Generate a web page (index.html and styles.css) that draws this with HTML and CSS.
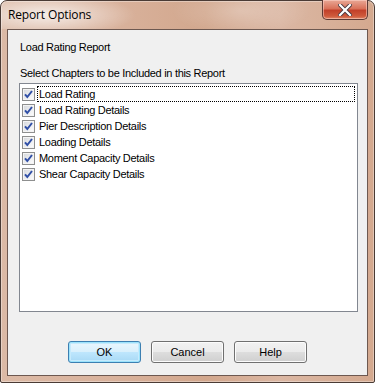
FILE: index.html
```html
<!DOCTYPE html>
<html>
<head>
<meta charset="utf-8">
<link rel="stylesheet" href="styles.css">
</head>
<body>
<div class="window">
  <div class="titlebar">
    <span class="title">Report Options</span>
    <button class="close" aria-label="Close">
      <svg width="14" height="12" viewBox="0 0 14 12"><path d="M2 1 L12 11 M12 1 L2 11" stroke="#4a3a40" stroke-width="4" stroke-linecap="square"/><path d="M2 1 L12 11 M12 1 L2 11" stroke="#ffffff" stroke-width="2.2" stroke-linecap="square"/></svg>
    </button>
  </div>
  <div class="client">
    <div class="label first">Load Rating Report</div>
    <div class="label second">Select Chapters to be Included in this Report</div>
    <div class="listbox">
      <div class="row"><span class="cb"></span><span class="text focus">Load Rating</span></div>
      <div class="row"><span class="cb"></span><span class="text">Load Rating Details</span></div>
      <div class="row"><span class="cb"></span><span class="text">Pier Description Details</span></div>
      <div class="row"><span class="cb"></span><span class="text">Loading Details</span></div>
      <div class="row"><span class="cb"></span><span class="text">Moment Capacity Details</span></div>
      <div class="row"><span class="cb"></span><span class="text">Shear Capacity Details</span></div>
    </div>
    <div class="buttons">
      <button class="btn default">OK</button>
      <button class="btn">Cancel</button>
      <button class="btn">Help</button>
    </div>
  </div>
</div>
</body>
</html>
```
FILE: styles.css
```css
html, body { margin: 0; padding: 0; background: #ffffff; }
.window {
  width: 375px; height: 383px; box-sizing: border-box;
  border: 1px solid #4a3b35; border-radius: 7px 7px 2px 2px;
  background: linear-gradient(90deg, #dcbaa6 0%, #d9b29c 30%, #d2a78d 55%, #dbb7a3 75%, #d4a98f 100%);
  display: flex; flex-direction: column;
  box-shadow: inset 0 0 0 1px rgba(255,255,255,0.35);
}
.titlebar {
  height: 28px; display: flex; align-items: flex-start; position: relative;
  background: radial-gradient(ellipse 90px 22px at 45px 14px, rgba(255,255,255,0.75), rgba(255,255,255,0) 100%),
              radial-gradient(ellipse 70px 24px at 240px 10px, rgba(255,255,255,0.25), rgba(255,255,255,0) 100%);
  border-radius: 6px 6px 0 0;
}
.title {
  font-family: "Open Sans", "Noto Sans", sans-serif; font-size: 12px; color: #000;
  margin: 6px 0 0 7px; line-height: 16px; letter-spacing: -0.15px;
}
.close {
  margin-left: auto; margin-right: 6px; margin-top: -1px;
  width: 46px; height: 20px; padding: 0; box-sizing: border-box;
  border: 1px solid #5c3a35; border-top: none; border-radius: 0 0 5px 5px;
  background: linear-gradient(180deg, #e9a896 0%, #d9725a 45%, #c2402a 55%, #cf5a3c 85%, #e08868 100%);
  box-shadow: inset 0 0 0 1px rgba(255,220,210,0.5);
  display: flex; align-items: center; justify-content: center;
}
.client {
  flex: 1; margin: 0 6px 6px 6px;
  border: 1px solid #6d5850; background: #f0f0f0;
  display: flex; flex-direction: column;
  font-family: "Liberation Sans", Arial, sans-serif; font-size: 11px; color: #000;
  letter-spacing: -0.3px;
}
.label { line-height: 13px; margin-left: 12px; }
.label.first { margin-top: 11px; }
.label.second { margin-top: 13px; }
.listbox {
  margin: 3px 9px 0 11px; height: 229px; box-sizing: border-box;
  border: 1px solid #828790; background: #ffffff; padding-top: 2px;
}
.row { height: 16px; display: flex; align-items: center; }
.cb {
  width: 13px; height: 13px; box-sizing: border-box; margin-left: 2px; flex: none;
  border: 1px solid #8e8f8f;
  background:
    url("data:image/svg+xml;utf8,<svg xmlns='http://www.w3.org/2000/svg' width='11' height='11' viewBox='0 0 11 11'><path d='M2 5.3 L4.3 8 L9 2' fill='none' stroke='%23304fa6' stroke-width='2'/></svg>") center/11px 11px no-repeat,
    linear-gradient(135deg, #d4d7dc 0%, #eeeff1 60%, #ffffff 100%);
  box-shadow: inset 0 0 0 1px #f4f4f4;
}
.text { margin-left: 2px; padding: 0 1px; line-height: 14px; border: 1px solid transparent; }
.text.focus { flex: 1; margin-right: 2px; border: 1px dotted #000; }
.buttons {
  margin-top: 29px; display: flex; justify-content: center; gap: 10px;
}
.btn {
  width: 73px; height: 22px; box-sizing: border-box; padding: 0;
  font-family: "Liberation Sans", Arial, sans-serif; font-size: 11px; color: #000;
  border: 1px solid #707070; border-radius: 3px;
  background: linear-gradient(180deg, #f2f2f2 0%, #ebebeb 48%, #dddddd 52%, #cfcfcf 100%);
  box-shadow: inset 0 0 0 1px #fcfcfc;
}
.btn.default {
  border-color: #3c7fb1;
  background: linear-gradient(180deg, #eaf6fd 0%, #d9f0fc 48%, #bee6fd 52%, #a7d9f5 100%);
  box-shadow: inset 0 0 0 1px #48d5fc55, inset 0 0 0 2px #c6eafc;
}
```
